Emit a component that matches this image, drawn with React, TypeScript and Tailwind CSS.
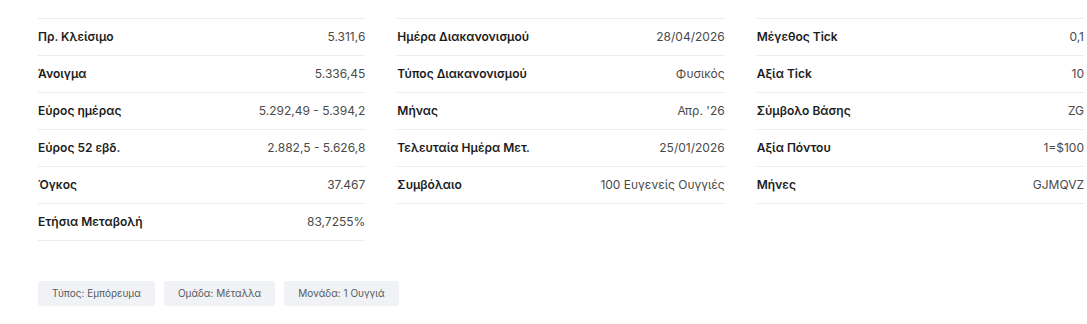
import React from 'react';

type Row = { label: string; value: string };

const columns: Row[][] = [
  [
    { label: 'Πρ. Κλείσιμο', value: '5.311,6' },
    { label: 'Άνοιγμα', value: '5.336,45' },
    { label: 'Εύρος ημέρας', value: '5.292,49 - 5.394,2' },
    { label: 'Εύρος 52 εβδ.', value: '2.882,5 - 5.626,8' },
    { label: 'Όγκος', value: '37.467' },
    { label: 'Ετήσια Μεταβολή', value: '83,7255%' },
  ],
  [
    { label: 'Ημέρα Διακανονισμού', value: '28/04/2026' },
    { label: 'Τύπος Διακανονισμού', value: 'Φυσικός' },
    { label: 'Μήνας', value: "Απρ. '26" },
    { label: 'Τελευταία Ημέρα Μετ.', value: '25/01/2026' },
    { label: 'Συμβόλαιο', value: '100 Ευγενείς Ουγγιές' },
  ],
  [
    { label: 'Μέγεθος Tick', value: '0,1' },
    { label: 'Αξία Tick', value: '10' },
    { label: 'Σύμβολο Βάσης', value: 'ZG' },
    { label: 'Αξία Πόντου', value: '1=$100' },
    { label: 'Μήνες', value: 'GJMQVZ' },
  ],
];

const tags = ['Τύπος: Εμπόρευμα', 'Ομάδα: Μέταλλα', 'Μονάδα: 1 Ουγγιά'];

export default function App() {
  return (
    <div className="min-h-[324px] bg-white pl-[38px] pr-[3px] pt-[18px] font-['Inter',sans-serif]">
      <div className="grid grid-cols-3 items-start gap-x-[32px]">
        {columns.map((rows, ci) => (
          <div key={ci} className="border-t border-[#ececec]">
            {rows.map((row) => (
              <div
                key={row.label}
                className="flex h-[37px] items-center justify-between border-b border-[#ececec] text-[12px]"
              >
                <span className="font-semibold text-[#1c1c1c]">{row.label}</span>
                <span className="text-[#4a4a4a]">{row.value}</span>
              </div>
            ))}
          </div>
        ))}
      </div>

      <div className="mt-[40px] flex gap-[9px]">
        {tags.map((t) => (
          <span
            key={t}
            className="flex h-[25px] items-center rounded-[3px] bg-[#f0f2f5] px-[14px] text-[10px] text-[#555b63]"
          >
            {t}
          </span>
        ))}
      </div>
    </div>
  );
}
